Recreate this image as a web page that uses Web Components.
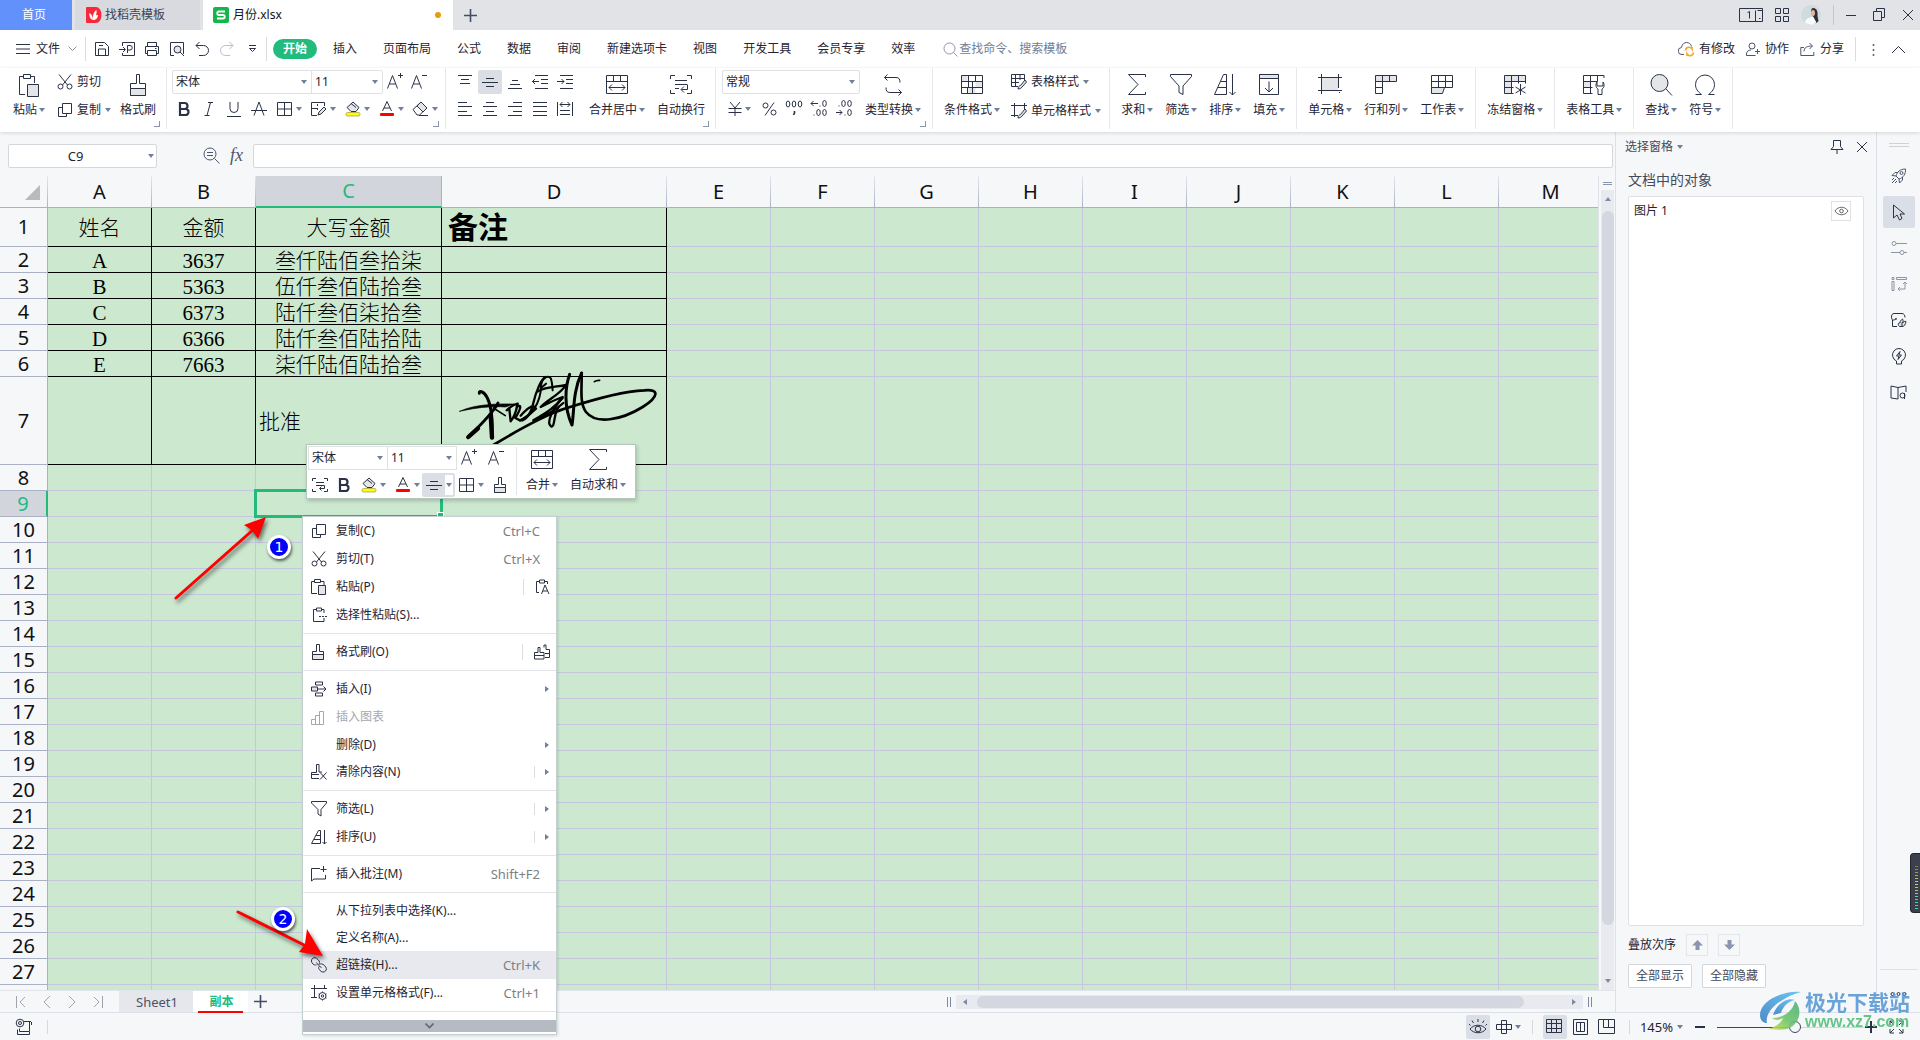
<!DOCTYPE html>
<html lang="zh-CN">
<head>
<meta charset="utf-8">
<title>月份.xlsx</title>
<style>
html,body{margin:0;height:100%}
body{font:12px/18px "Noto Sans","Noto Sans CJK SC",sans-serif;color:#1f2433;background:#f6f7f9;overflow:hidden}
</style>
</head>
<body>
<app-shell></app-shell>
<script>
const BASE = `
*{box-sizing:border-box}
:host{display:block}
button,input,select{font:inherit;color:inherit;background:none;border:0;margin:0;padding:0;outline:0;appearance:none;border-radius:0}
button{display:inline-flex;align-items:center;justify-content:center;white-space:nowrap;cursor:default}
a{color:inherit;text-decoration:none}
.caret{flex:none;display:inline-block;border:3px solid transparent;border-top:4px solid #717f9b;border-bottom:0}
.sel{position:relative;display:flex;align-items:center}
.sel select{width:100%;height:100%;padding-left:3px}
.sel .caret{position:absolute;right:4px;pointer-events:none}
`;
function define(name, css, html, ready) {
  customElements.define(name, class extends HTMLElement {
    connectedCallback() {
      if (this.shadowRoot) return;
      const root = this.attachShadow({mode: 'open'});
      root.innerHTML = `<style>${BASE}${css}</style>` + (typeof html === 'function' ? html(this) : html);
      if (ready) ready(this, root);
    }
  });
}

/* ---------- icons: [width, height, markup] ---------- */
const G = '#e3e5e9';
const I = {
  docer:[16,16,`<path d="M1 0h9a5.500 8 0 0 1 0 16H1a1 1 0 0 1-1-1V1a1 1 0 0 1 1-1z" fill="#f8283a" stroke="none"/><path d="M7 13C4 12 3 9 3.500 6c2 1 3 3 3.500 7zM7 13c-.5-4 .5-8 3.500-10 .5 4-.5 7-3.500 10zM7 13c.5-3 2-5 5-5 0 3-2 5-5 5z" fill="#fff" stroke="none"/>`],
  wps:[16,16,`<rect width="16" height="16" rx="2" fill="#14b54a" stroke="none"/><path d="M12 4.500H6A1.750 1.750 0 0 0 6 8h4a1.750 1.750 0 0 1 0 3.500H4" stroke="#fff" stroke-width="1.800"/>`],
  plus:[13,13,`<path d="M6.500 0v13M0 6.500h13" stroke="#434d66" stroke-width="1.600"/>`],
  device:[24,16,`<path d="M.5 1.500h23v13H.5z"/><path d="M16.500 3.500v11"/><path d="M8.500 5.500l2-1v7M18.500 3.500h5M20 11.500h1.500"/>`],
  apps:[14,16,`<path d="M.5 1.500h5v5h-5zM8.500 1.500h5v5h-5zM.5 9.500h5v5h-5zM8.500 9.500h5v5h-5z"/>`],
  avatar:[20,20,`<circle cx="10" cy="10" r="10" fill="#cfdcdf" stroke="none"/><path d="M12 3c4 0 5 4 4.500 8l1 5-2 2-3-6-2-3c-1-3 0-6 1.500-6z" fill="#352c30" stroke="none"/><ellipse cx="12" cy="8" rx="2" ry="3" fill="#e4b7a4" stroke="none"/><path d="M4 18c0-4 4-6 8-6l3 5-4 3z" fill="#f7fbfb" stroke="none"/>`],
  min:[10,14,`<path d="M0 7.500h10"/>`],
  restore:[12,14,`<path d="M3.500 3.500v-3h8v9h-3M.5 3.500h8v9h-8z"/>`],
  close:[12,14,`<path d="M1 2l10 10M11 2L1 12"/>`],
  burger:[14,12,`<path d="M0 1.500h14M0 6h14M0 10.500h14"/>`],
  chev:[9,6,`<path d="M.5.5l4 4 4-4" stroke="#8f97a5"/>`],
  chevd:[9,6,`<path d="M.5.500l4 4 4-4" stroke="#636873" stroke-width="1.600"/>`],
  save:[16,16,`<path d="M1.500 1.500h9l4 4v9h-13z"/><path d="M4.500 14v-6h7v6M5 4.500h4"/>`],
  export:[16,16,`<path d="M3.500 5V1.500h12v13h-12V12"/><path d="M0 8.500h6M4 6l2.500 2.500L4 11M8.500 12V4.500h2.500a2 2 0 0 1 0 4.500H8.500"/>`],
  print:[16,16,`<path d="M3.500 5V1.500h9V5M3.500 12.500h-2v-7h13v7h-2M3.500 9.500h9v5h-9z"/><path d="M11 7.500h1.500"/>`],
  preview:[16,16,`<path d="M5 14.500H1.500v-13h13V13"/><circle cx="8.500" cy="8.500" r="3.500" fill="${G}"/><path d="M11 11l4 4"/>`],
  undo:[14,16,`<path d="M4.500 1L1 4.500 4.500 8M1 4.500h7.500a4.500 4.500 0 0 1 0 10H4"/>`],
  redo:[14,16,`<path d="M9.500 1L13 4.500 9.500 8M13 4.500H5.500a4.500 4.500 0 0 0 0 10H10" stroke="#b9bec8"/>`],
  more:[9,8,`<path d="M1 .5h7M1.500 3.500l3 3 3-3z"/>`],
  search:[15,15,`<circle cx="6.500" cy="6.500" r="5.500" stroke="#8b95ab"/><path d="M10.500 10.500l4 4" stroke="#8b95ab"/>`],
  cloud:[17,16,`<path d="M6 13.500H4a3.500 3.500 0 0 1-.5-7C4 3 6.500 1.500 8.500 1.500c2.500 0 4.500 1.500 5 4" stroke="#4c566e"/><path d="M7.500 9.500a3.500 3.500 0 0 1 6.500-1.500V6M15.500 11.500A3.500 3.500 0 0 1 9 13v2" stroke="#f6a623" stroke-width="1.600"/>`],
  coop:[15,15,`<circle cx="6" cy="4" r="3" stroke="#4c566e"/><path d="M9.500 13.500h-9V12c0-2.500 2-4 4.500-4M11.500 7v5M9 9.500h5" stroke="#4c566e"/>`],
  share:[16,15,`<path d="M4 5.500H.8v8h13V10M4 9.500c0-4 3-5.500 8-5.500M9.500 1l3 3-3 3" stroke="#4c566e"/>`],
  dots:[3,13,`<path d="M1.500 1v2M1.500 6v2M1.500 11v2" stroke="#666" stroke-width="1.600"/>`],
  up:[15,9,`<path d="M1 8l6.500-6.500L14 8"/>`],
  paste:[24,24,`<path d="M8 21.500H2.500v-18H6M14 3.500h3.500V10"/><path d="M6.500 1.500h7v4h-7z"/><path d="M10.500 11.500h11v12h-11z" fill="${G}"/>`],
  brush:[20,24,`<path d="M8.500 10.500v-9h3v9h6v12h-15v-12z"/><path d="M2.500 15.500h15v7h-15z" fill="${G}"/>`],
  cut:[16,16,`<path d="M2 .5l8.500 10.500M14 .5L5.500 11"/><circle cx="3.500" cy="12.500" r="2.500"/><circle cx="12.500" cy="12.500" r="2.500"/>`],
  copy:[16,16,`<path d="M5.500 5.500h-4v9h8v-3"/><path d="M5.500 1.500h9v10h-9z"/>`],
  aplus:[16,18,`<path d="M.5 16.500l5-13 5 13M2.500 12h6"/><path d="M13.500 1v5M11 3.500h5"/>`],
  aminus:[16,18,`<path d="M.5 16.500l5-13 5 13M2.500 12h6"/><path d="M11 3.500h5"/>`],
  bold:[12,16,`<path d="M2 2h4.500a3 3 0 0 1 0 6H2zM2 8h5.500a3 3 0 0 1 0 6H2z" stroke-width="2.200"/>`],
  italic:[12,16,`<path d="M5 1.500h5M1.500 14.500h5M7.500 1.500l-3.500 13"/>`],
  under:[14,16,`<path d="M3 1v6.500a4 4 0 0 0 8 0V1M0 15.500h14"/>`],
  strike:[16,16,`<path d="M3 14.500L8 1l5 13.500M0 9.500h16"/>`],
  border:[16,16,`<path d="M.5 1.500h14v13H.5zM7.500 1.500v13M.5 8h14"/>`],
  drawb:[17,16,`<path d="M7 14.500H1.500v-13h13V5M1.500 7.500H8M7.500 3v2M7.500 7v2"/><path d="M8 14l1-3 5-5 2 2-5 5z" fill="${G}"/>`],
  fill:[16,16,`<path d="M8 1L2 6.500l4 4h5l3-4zM6 2.500l5 4" fill="${G}"/><rect x="1" y="11.500" width="14" height="3.500" rx="1.500" fill="#ff0" stroke="#8a8a2a" stroke-width=".6"/>`],
  fcolor:[16,16,`<path d="M3.500 10L8 .5l4.500 9.500M5 7h6"/><rect x="1" y="12" width="14" height="3" rx="1" fill="#f00" stroke="none"/>`],
  eraser:[17,16,`<path d="M1 8.500L9 1l6 6-7.500 7H5z"/><path d="M5 5l6 6 4-4-6-6z" fill="${G}"/><path d="M7 14.500h9"/>`],
  valt:[16,16,`<path d="M1 1.500h14M4 5.500h8M3 9.500h10"/>`],
  valm:[18,16,`<path d="M5 4.500h8M1 8.500h16M5 12.500h8"/>`],
  valb:[16,16,`<path d="M5 6.500h6M3 10.500h10M1 14.500h14"/>`],
  inddec:[16,16,`<path d="M3 1.500h13M9 5.500h7M9 9.500h7M3 14.500h13M0 7.500h7M3 5L.5 7.500 3 10"/>`],
  indinc:[16,16,`<path d="M3 1.500h13M9 5.500h7M9 9.500h7M3 14.500h13M0 7.500h7M4.500 5L7 7.500 4.500 10"/>`],
  al:[15,16,`<path d="M0 1.500h9M0 5.500h14M0 10.500h9M0 14.500h14"/>`],
  ac:[15,16,`<path d="M3 1.500h8M0 5.500h14M3 10.500h8M0 14.500h14"/>`],
  ar:[15,16,`<path d="M5 1.500h9M0 5.500h14M5 10.500h9M0 14.500h14"/>`],
  aj:[15,16,`<path d="M0 1.500h14M0 5.500h14M0 10.500h14M0 14.500h14"/>`],
  ad:[16,16,`<path d="M.5 1v14M15.500 1v14M3 3.500h10M5.500 1L3 3.500 5.500 6M10.500 1L13 3.500 10.500 6M3 9.500h10M3 13.500h10"/>`],
  merge:[24,22,`<path d="M1.500 1.500h21v18h-21zM1.500 7.500h21M8.500 1.500v6M15.500 1.500v6M4 13.500h16M7 10.500l-3 3 3 3M17 10.500l3 3-3 3"/>`],
  wrap:[24,22,`<path d="M1.500 5v-3.500H6M18 1.500h4.500V5M1.500 16v3.500H6M18 19.500h4.500V16M6 6.500h12M6 10.500h12M6 14.500h4M18.500 10.500v5h-6M15 12.500l-3 3 3 3"/>`],
  wraps:[16,16,`<path d="M.5 4V1.500H4M12 1.500h3.500V4M.5 12v2.500H4M12 14.500h3.500V12M4 5.500h8M4 8.500h8.500v3H8M9.500 9.500l-2 2 2 2"/>`],
  yen:[14,16,`<path d="M2 1l5 6 5-6M7 7v8M.5 7.500h13M.5 11.500h13"/>`],
  pct:[15,16,`<circle cx="3.500" cy="4.500" r="2.500"/><circle cx="11.500" cy="11.500" r="2.500"/><path d="M12 1.500L3 14.500"/>`],
  thou:[18,18,`<ellipse cx="3" cy="5" rx="1.800" ry="3"/><ellipse cx="9" cy="5" rx="1.800" ry="3"/><ellipse cx="15" cy="5" rx="1.800" ry="3"/><path d="M9.500 12v2l-1 2" stroke-width="1.600"/>`],
  decinc:[18,18,`<path d="M1 4.500h7M3.500 2L1 4.500 3.500 7M10 6.500v1"/><ellipse cx="14.500" cy="4.500" rx="1.800" ry="3"/><ellipse cx="8.500" cy="13.500" rx="1.800" ry="3"/><ellipse cx="14.500" cy="13.500" rx="1.800" ry="3"/><path d="M4 15.500v1"/>`],
  decdec:[18,18,`<path d="M1 13.500h6M4.500 11L7 13.500 4.500 16M10 15.500v1M4 6.500v1"/><ellipse cx="14.500" cy="4.500" rx="1.800" ry="3"/><ellipse cx="8.500" cy="4.500" rx="1.800" ry="3"/><ellipse cx="14.500" cy="13.500" rx="1.800" ry="3"/>`],
  conv:[20,24,`<path d="M4.500 1.500l-3 3 3 3M1.500 4.500H13c3 0 4 1.500 4 5M15.500 22.500l3-3-3-3M18.500 19.500H7c-3 0-4-1.500-4-5"/>`],
  cond:[24,22,`<path d="M1.500 1.500h6v6h-6zM15.500 7.500h7v6h-7zM8.500 13.500h7v6h-7z" fill="${G}" stroke="none"/><path d="M1.500 1.500h21v18h-21zM1.500 7.500h21M1.500 13.500h21M8.500 1.500v12M15.500 1.500v6M12.500 7.500v12M7.500 13.500v6"/>`],
  tstyle:[16,18,`<path d="M7 13.500H.5v-12h13V7M.5 5.500h13M.5 9.500H8M4.500 1.500v12M9 1.500V7"/><path d="M7 16c0-2 1-3 2.500-3.500L14 7l1.500 2-4.500 5c-1 1.500-2.500 2-4 2z" fill="${G}"/>`],
  cstyle:[16,18,`<path d="M0 3.500h16M3.500 1v14M0 13.500h7M13.500 1v6"/><path d="M7 16c0-2 1-3 2.500-3.500L14 7l1.500 2-4.500 5c-1 1.500-2.500 2-4 2z" fill="${G}"/>`],
  sum:[20,24,`<path d="M18.500 4V1.500h-17L11 11.500l-9.500 10h17V19"/>`],
  filter:[24,24,`<path d="M1.500 1.500h21v2L14 13v8.500l-4-2V13L1.500 3.500z"/>`],
  sort:[24,24,`<path d="M1.500 21.500l9-20h3v20zM5 14.500h8.500M8 8.500h5.500M19.500 1v21M16.500 19l3 3 3-3"/>`],
  filld:[22,24,`<path d="M1.500 1.500h19v20h-19z"/><path d="M1.500 1.500h19v4h-19z" fill="${G}"/><path d="M11 8.500V19M7 15l4 4 4-4"/>`],
  cell:[24,22,`<path d="M4 4h16v12H4z" fill="${G}" stroke="none"/><path d="M0 3.500h24M0 16.500h24M3.500 0v20M20.500 0v14"/><path d="M21 18.500h1"/>`],
  rowcol:[24,22,`<path d="M1.500 1.500h21v6h-21z" fill="${G}"/><path d="M1.500 7.500h7v12h-7zM8.500 1.500v6M15.500 1.500v6M1.500 13.500h7"/>`],
  sheet:[24,22,`<path d="M1.500 1.500h21v12h-21zM1.500 7.500h21M8.500 1.500v12M15.500 1.500v12"/><path d="M1.500 13.500h13l-2 6h-11z" fill="${G}"/>`],
  freeze:[24,24,`<path d="M1.500 2.500h21v6h-14v12h-7z" fill="${G}" stroke="none"/><path d="M1.500 2.500h21v8M1.500 2.500v18h9M1.500 8.500h21M8.500 2.500v18M15.500 2.500v8M1.500 14.500h9M17.500 11v11M12.500 14l10 6M22.500 14l-10 6"/>`],
  ttool:[24,24,`<path d="M1.500 8.500h7v6h-7z" fill="${G}" stroke="none"/><path d="M22 5V2.500h-20.500v18h9M1.500 8.500h14M8.500 2.500v18M15.500 2.500v6M1.500 14.500h9"/><path d="M15 9c-2 3-1 6 1 7v5.500h4V16c2-1 3-4 1-7v4h-6z" fill="#fff"/>`],
  find:[24,24,`<circle cx="10.500" cy="10" r="8.500" fill="${G}"/><path d="M17 16l6 6.500"/>`],
  omega:[22,24,`<path d="M1.500 21.500h6c-4-3-6-6-6-10a9.500 9.500 0 0 1 19 0c0 4-2 7-6 10h6"/>`],
  zoomo:[17,17,`<circle cx="7" cy="7" r="6" stroke="#4c5872"/><path d="M11.500 11.500l5 5M4 5.500h6M4 8.500h6" stroke="#4c5872"/>`],
  first:[10,12,`<path d="M.5 0v12M9 1L4 6l5 5" stroke="#9fa3ab"/>`],
  prev:[8,12,`<path d="M7 0L1 6l6 6" stroke="#9fa3ab"/>`],
  next:[8,12,`<path d="M1 0l6 6-6 6" stroke="#9fa3ab"/>`],
  last:[10,12,`<path d="M9.500 0v12M1 1l5 5-5 5" stroke="#9fa3ab"/>`],
  macro:[18,18,`<circle cx="5" cy="5" r="3.800"/><circle cx="5" cy="5" r="1.500"/><path d="M9 3.500h7M14.500 4v9M16.500 4v3M2.500 11.500v5h12v-3h-10v-3"/>`],
  eye:[18,16,`<path d="M1 10c4-5 12-5 16 0-4 5-12 5-16 0z"/><circle cx="9" cy="10" r="2.800"/><path d="M9 3V0M4.500 4L3 1.500M13.500 4L15 1.500M1.500 6.500L0 5M16.500 6.500L18 5"/>`],
  eyes:[15,12,`<path d="M1 6c3-5 10-5 13 0-3 5-10 5-13 0z" stroke="#666"/><circle cx="7.500" cy="6" r="1.800" stroke="#666"/>`],
  cross:[16,14,`<path d="M5.500.5h5v13h-5zM.5 4.500h15v5H.5z"/>`],
  vgrid:[17,15,`<path d="M.5.500h15v13H.5zM.5 4.500h15M.5 9.500h15M5.500.500v13M10.500.500v13"/>`],
  vpage:[15,16,`<path d="M.5.5h14v15H.5zM3.500 3.500h8v9h-8zM7.500 3.500v9"/>`],
  vbreak:[17,15,`<path d="M.5.5h16v14H.5zM5.500.5v8h11M10.500.5v8"/>`],
  full:[15,14,`<path d="M1 5V1h4M10 1h4v4M14 9v4h-4M5 13H1V9M1 1l4 4M14 1l-4 4M14 13l-4-4M1 13l4-4"/>`],
  pin:[14,14,`<path d="M3.500.5h7v6l2.500 3H1l2.500-3zM7 9.500V14"/>`],
  rocket:[16,16,`<path d="M5 8c1-4 4-7 9.500-7C15 6 12 10 8 11zM5 8L1 7.500 4 4.500h3M8 11l.5 4 3-3V9M3 10l-2 2M5 11l-4 4M6 13l-2 2" stroke="#4c566e"/><circle cx="10.500" cy="5" r="1.500" stroke="#4c566e"/>`],
  cursor:[14,17,`<path d="M1.500 1v13l3.500-3 2.500 5 2.500-1.500-2-4.500h4.500z"/>`],
  sliders:[16,16,`<path d="M5 3.500h11M0 12.500h9M13 12.500h3" stroke="#8d94a3"/><circle cx="3" cy="3.500" r="2" stroke="#8d94a3"/><circle cx="11" cy="12.500" r="2" stroke="#8d94a3"/>`],
  layout:[16,16,`<path d="M1 1.500h2v2H1zM5.500 1.500h10v2h-10zM1 5.500h2v9H1zM14 6v7H7M12 8l2-2 2 2M9 11l-2 2 2 2" stroke="#8d94a3"/>`],
  backup:[17,16,`<path d="M7 14.500H2.500V8C1 6 1 1.500 4 1.500h8c2 0 3 2 3 4M3 8c2 0 3-.5 3-2M6 6v2"/><path d="M9.500 14.500c-2-1.500-1.500-4 .5-3.500 0-2 1-3 2.500-4 1 1.500.5 3 0 4 1-1.500 2.500-2 3.500-1.500-.5 3-1.500 5-4 5zM12 14.500v-4" fill="${G}"/>`],
  bulb:[16,17,`<path d="M5.500 13a6.500 6.500 0 1 1 5 0v3h-5z"/><path d="M9 3.500L5.500 8H8l-1 3.500L10.500 7H8z"/>`],
  book:[17,15,`<path d="M8 14l-7-1V1l7 1.500L16 1v6M8 2.500V14"/><circle cx="12.500" cy="10.500" r="2.500"/><path d="M14.500 8v6"/>`],
  ooo:[17,6,`<circle cx="2.500" cy="3" r="1.500"/><circle cx="8.500" cy="3" r="1.500"/><circle cx="14.500" cy="3" r="1.500"/>`],
  arrowup:[11,10,`<path d="M5.500 0L11 5.500H7.500V10h-4V5.500H0z" fill="#8b95ab" stroke="none"/>`],
  arrowdn:[11,10,`<path d="M5.500 10L0 4.500h3.500V0h4v4.500H11z" fill="#8b95ab" stroke="none"/>`],
  mpaste:[16,16,`<path d="M6 14.500H.5V2.500H3M10 2.500h3V6"/><path d="M3.500.5h6v3h-6z"/><path d="M7.500 6.500h7v9h-7z" fill="${G}"/>`],
  mspecial:[16,16,`<path d="M13 11v3.500H2.500V2.500H5M11 2.500h2V6"/><path d="M5.500 1h5v3h-5z"/><path d="M8 9.500h2M11 9.500h2M14 9.500h2"/>`],
  pastea:[16,16,`<path d="M4 13.500H1.500V2.500H4M10 2.500h2.500V5"/><path d="M4.500 1h5v3h-5z"/><path d="M6.500 15L10 6l4 9M8 12h4.500"/>`],
  mbrush:[14,16,`<path d="M5.500 7.500v-7h3v7h4v8h-11v-8z"/><path d="M1.500 10.500h11v5h-11z" fill="${G}"/>`],
  brush2:[17,16,`<path d="M10 3.500V1h2v4.500h3.500v8H11"/><path d="M4 8.500V3.500h2v5h4v6.500H.5V8.500z"/><path d="M.5 11.500h9.500M11 9.500h4"/>`],
  minsert:[16,16,`<path d="M4.500 1h7v3h-7zM4.500 12h7v3h-7z"/><path d="M.5 6h6v4h-6z" fill="${G}"/><path d="M6.500 8H15M12.500 5.500L15 8l-2.500 2.500"/>`],
  mchart:[14,15,`<path d="M.5 9.500h4v5h-4zM4.500 5.500h4v9h-4zM8.500 1.500h4v13h-4z" stroke="#a4a8b0"/>`],
  mclear:[17,16,`<path d="M8 14.500H.5V8.500h5V.500h2.500v7.500h3M.5 10.500H8M9 8.500l6.500 7M15.500 8.500L9 15.500"/>`],
  mfilter:[16,16,`<path d="M.5.5h15v1.500L10 8.500v6.500l-3-2V8.500L.5 2z"/>`],
  msort:[16,16,`<path d="M.5 14.500l7-13h2v13zM3 10.500h6.500M5 6.500h4.500M13.500 1v14M11.500 13l2 2 2-2"/>`],
  mnote:[16,16,`<path d="M9 2.500H.5v12.500l2.500-2h11.500V9M12.500 0v6M9.500 3.500h6"/>`],
  mlink:[16,16,`<path d="M2 7C0 5 0 3 1.500 1.500 3.500 0 5 .5 7 2.500S9 6.500 7.500 7.500M9 13.500c2 2 4 2 5.500.5s1-3.500-1-5.500-4-2-5-1M5.500 5.500c1 2 3 4 5 5M2 7c1 1 2 1 3.500 1M9 13.500C8 12 7 11 8 9.500"/>`],
  mformat:[16,16,`<path d="M0 3.500h16M3.500 0v12M0 12.500h6M13.500 0v4"/><circle cx="11.500" cy="11" r="3.500"/><circle cx="11.500" cy="11" r="1.200"/><path d="M11.500 6.500v1M11.500 14.500v1M7.500 9l1 .5M14.500 12.500l1 .5M15.500 9l-1 .5M8.500 12.500l-1 .5"/>`]
};
define('ui-icon', `:host{display:inline-flex;flex:none}svg{display:block;fill:none;stroke:#2b3245;stroke-width:1}`, el => {
  const [w, h, m] = I[el.getAttribute('name')];
  return `<svg width="${w}" height="${h}" viewBox="0 0 ${w} ${h}" aria-hidden="true">${m}</svg>`;
});

/* ---------- title bar ---------- */
define('title-bar', `
:host{display:flex;height:30px;background:#e1e3e7;gap:3px;align-items:stretch}
.tab{display:flex;align-items:center}
.home{width:72px;justify-content:center;padding-right:4px;background:#6391fc;color:#fff}
.tpl{width:125px;justify-content:flex-start;padding-left:11px;gap:3px;background:#d8dadf;color:#3c4354}
.doc{width:250px;padding:0 12px 0 10px;gap:4px;background:#fff;color:#111}
.dot{margin-left:auto;width:6px;height:6px;border-radius:50%;background:#e59d0d}
.add{margin-left:8px}
.win{margin-left:auto;display:flex;align-items:center;gap:12px;padding-right:6px}
.win i{width:1px;height:20px;background:#c3c6cd}
.ctl{display:flex;gap:17px}`,
`<button class="tab home">首页</button>
<button class="tab tpl"><ui-icon name="docer"></ui-icon>找稻壳模板</button>
<button class="tab doc"><ui-icon name="wps"></ui-icon>月份.xlsx<span class="dot"></span></button>
<button class="add" aria-label="新建"><ui-icon name="plus"></ui-icon></button>
<div class="win"><ui-icon name="device"></ui-icon><ui-icon name="apps"></ui-icon><ui-icon name="avatar"></ui-icon><i></i>
<span class="ctl"><button aria-label="最小化"><ui-icon name="min"></ui-icon></button><button aria-label="还原"><ui-icon name="restore"></ui-icon></button><button aria-label="关闭"><ui-icon name="close"></ui-icon></button></span></div>`);

/* ---------- menu bar ---------- */
define('menu-bar', `
:host{display:flex;align-items:center;height:38px;background:#fff;padding:0 14px 0 16px}
.file{gap:6px}.file ui-icon:last-child{margin-left:2px}
.sep{width:1px;height:24px;background:#d9dbe0;margin:0 8px}
.quick{display:flex;gap:9px;align-items:center}
.quick button{width:16px}
nav{display:flex;gap:26px;margin-left:16px}
.on{background:#22bb7e;color:#fff;font-weight:700;height:20px;width:44px;border-radius:10px}
label{display:flex;align-items:center;gap:1px;margin-left:28px}
input{width:160px}input::placeholder{color:#717c95;opacity:1}
.r{margin-left:auto;display:flex;align-items:center;gap:11px}
.r button{gap:4px}.r .sep{margin:0}.r .last{margin-left:5px}`,
`<button class="file"><ui-icon name="burger"></ui-icon>文件<ui-icon name="chev"></ui-icon></button><span class="sep"></span>
<div class="quick">${['save','export','print','preview','undo','redo','more'].map(n => `<button aria-label="${n}"><ui-icon name="${n}"></ui-icon></button>`).join('')}</div><span class="sep" style="margin:0 6px"></span>
<button class="on">开始</button>
<nav>${['插入','页面布局','公式','数据','审阅','新建选项卡','视图','开发工具','会员专享','效率'].map(t => `<a href="#">${t}</a>`).join('')}</nav>
<label aria-label="搜索"><ui-icon name="search"></ui-icon><input placeholder="查找命令、搜索模板"></label>
<div class="r"><button><ui-icon name="cloud"></ui-icon>有修改</button><button><ui-icon name="coop"></ui-icon>协作</button><button><ui-icon name="share"></ui-icon>分享</button>
<span class="sep"></span><button class="last" aria-label="更多"><ui-icon name="dots"></ui-icon></button><button class="last" aria-label="收起"><ui-icon name="up"></ui-icon></button></div>`);

/* ---------- ribbon parts ---------- */
define('big-button', `
button{flex-direction:column;justify-content:flex-start}
.ic{height:26px;display:flex;align-items:center;margin-bottom:3px}
.tx{display:flex;align-items:center;gap:2px;height:18px}`, el =>
`<button><span class="ic"><ui-icon name="${el.getAttribute('icon')}"></ui-icon></span><span class="tx"><slot></slot>${el.hasAttribute('plain') ? '' : '<i class="caret"></i>'}</span></button>`);
define('tool-button', `
button{height:24px;min-width:24px;gap:3px}
:host([drop]) button{min-width:34px}
:host([text]) button{gap:4px}
:host([on]) button{background:#dbdfe5;border-radius:2px}`, el =>
`<button aria-label="${el.getAttribute('icon')}"><ui-icon name="${el.getAttribute('icon')}"></ui-icon><slot></slot>${el.hasAttribute('drop') ? '<i class="caret"></i>' : ''}</button>`);
define('ribbon-group', `
:host{display:flex;position:relative;gap:12px;height:61px;padding:4px 11px 0;border-right:1px solid #e6e8eb}
:host([corner])::after{content:"";position:absolute;right:6px;bottom:2px;width:5px;height:5px;border:solid #8b95ab;border-width:0 1px 1px 0}`, `<slot></slot>`);
const tb = (i, a = '', t = '') => `<tool-button icon="${i}" ${a}>${t}</tool-button>`;
const bb = (i, t, a = '') => `<big-button icon="${i}" ${a}>${t}</big-button>`;
define('ribbon-bar', `
:host{display:flex;height:64px;background:#fff;box-shadow:0 1px 4px #0002;position:relative;z-index:2}
.col{display:flex;flex-direction:column;align-items:flex-start;gap:3px;margin-top:-2px}
.row{display:flex;align-items:center;height:24px}
.g1{padding:4px 10px 0 13px;gap:9px}.g1 .col{margin-left:3px}
.g2{padding:4px 3px 0 5px}.g3{padding:4px 10px 0 7px}.g4{padding:4px 11px 0 6px;gap:5px}.g5{padding-right:8px;gap:11px}
.box{display:flex;border:1px solid #dfe1e5;border-radius:2px}
.a1{gap:1px}
.f1{width:138px;height:22px}.f2{width:71px;height:22px;border-left:1px solid #dfe1e5}
.f3{width:136px;height:22px}`,
`<ribbon-group corner class="g1">${bb('paste','粘贴')}<div class="col">${tb('cut','text','剪切')}${tb('copy','text drop','复制')}</div>${bb('brush','格式刷','plain')}</ribbon-group>
<ribbon-group corner class="g2"><div class="col"><div class="row"><div class="box"><span class="sel f1"><select aria-label="字体"><option>宋体</option></select><i class="caret"></i></span><span class="sel f2"><select aria-label="字号"><option>11</option></select><i class="caret"></i></span></div>${tb('aplus')}${tb('aminus')}</div>
<div class="row a1">${tb('bold')}${tb('italic')}${tb('under')}${tb('strike')}<span class="row">${tb('border','drop')}${tb('drawb','drop')}${tb('fill','drop')}${tb('fcolor','drop')}${tb('eraser','drop')}</span></div></div></ribbon-group>
<ribbon-group corner class="g3"><div class="col"><div class="row a1">${tb('valt')}${tb('valm','on')}${tb('valb')}${tb('inddec')}${tb('indinc')}</div><div class="row a1">${tb('al')}${tb('ac')}${tb('ar')}${tb('aj')}${tb('ad')}</div></div>${bb('merge','合并居中')}${bb('wrap','自动换行','plain')}</ribbon-group>
<ribbon-group corner class="g4"><div class="col"><div class="row"><div class="box"><span class="sel f3"><select aria-label="数字格式"><option>常规</option></select><i class="caret"></i></span></div></div><div class="row a1">${tb('yen','drop')}${tb('pct')}${tb('thou')}${tb('decinc')}${tb('decdec')}</div></div>${bb('conv','类型转换')}</ribbon-group>
<ribbon-group class="g5">${bb('cond','条件格式')}<div class="col">${tb('tstyle','text drop','表格样式')}${tb('cstyle','text drop','单元格样式')}</div></ribbon-group>
<ribbon-group>${bb('sum','求和')}${bb('filter','筛选')}${bb('sort','排序')}${bb('filld','填充')}</ribbon-group>
<ribbon-group>${bb('cell','单元格')}${bb('rowcol','行和列')}${bb('sheet','工作表')}</ribbon-group>
<ribbon-group>${bb('freeze','冻结窗格')}</ribbon-group>
<ribbon-group>${bb('ttool','表格工具')}</ribbon-group>
<ribbon-group>${bb('find','查找')}${bb('omega','符号')}</ribbon-group>`);

/* ---------- formula bar ---------- */
define('formula-bar', `
:host{display:flex;align-items:center;height:44px;padding:4px 2px 0 8px}
.name{width:149px;height:24px;border:1px solid #d5d7dc;border-radius:2px;background:#fff}
.name input{width:100%;height:100%;text-align:center;font-size:13px;padding-right:14px}
.name .caret{right:2px}
.tools{display:flex;align-items:center;gap:10px;margin:-2px 10px 0 46px;color:#4c5872}
.fx{font:italic 18px/18px "Liberation Serif",serif}
.val{flex:1;min-width:0;height:24px;border:1px solid #d5d7dc;border-radius:2px;background:#fff;padding:0 6px}`,
`<div class="sel name"><input aria-label="名称框" value="C9"><i class="caret"></i></div>
<div class="tools"><ui-icon name="zoomo"></ui-icon><span class="fx">fx</span></div><input class="val" aria-label="编辑栏">`);

/* ---------- sheet ---------- */
const DATA = [['姓名','金额','大写金额','备注'],['A','3637','叁仟陆佰叁拾柒',''],['B','5363','伍仟叁佰陆拾叁',''],['C','6373','陆仟叁佰柒拾叁',''],['D','6366','陆仟叁佰陆拾陆',''],['E','7663','柒仟陆佰陆拾叁',''],['','','批准','']];
define('signature-mark', `:host{position:absolute;left:14px;top:-9px;z-index:1;pointer-events:none}svg{display:block;fill:none;stroke:#000;stroke-linecap:round;stroke-linejoin:round}`,
`<svg width="204" height="80" viewBox="170 595 612 240" role="img" aria-label="签名">
<path d="M181 725C210 712 250 701 345 703L318 712C270 708 220 716 181 725z" fill="#000" stroke-width="2"/>
<path d="M240 671C238 660 255 665 264 685C280 718 280 760 278 804" stroke-width="9"/><path d="M274 735L278 804" stroke-width="13"/>
<path d="M296 700C285 725 250 760 206 803" stroke-width="9"/><path d="M236 776L207 802" stroke-width="13"/>
<path d="M282 715L318 738" stroke-width="5"/>
<path d="M330 718L334 755C350 735 352 715 355 702C340 705 330 715 322 722M352 712C372 700 360 725 348 745L362 752C372 748 385 740 410 717C402 700 380 720 364 738" stroke-width="7"/>
<path d="M362 752C392 745 425 700 425 648C428 625 446 614 455 627C460 645 459 655 460 662M425 655L440 642" stroke-width="6"/>
<path d="M362 752C375 755 395 735 402 700C410 665 425 630 438 622" stroke-width="7"/>
<path d="M416 665C440 650 475 652 500 646C485 672 445 690 424 712C450 700 470 688 490 682C470 712 440 730 402 752C442 738 470 720 492 700" stroke-width="7"/>
<path d="M490 685C460 715 440 760 455 770C468 775 462 730 478 712" stroke-width="7"/>
<path d="M511 614C498 650 492 710 518 766C525 725 520 665 547 610" stroke-width="9"/>
<path d="M547 610C548 655 540 700 560 727C590 765 665 752 730 712C780 680 780 657 735 662C670 665 580 690 500 716C430 738 350 785 282 826" stroke-width="8"/>
<path d="M585 636C592 631 598 632 601 632" stroke-width="5"/></svg>`);
define('sheet-grid', `
:host{position:relative;overflow:hidden;min-height:0;background:#f6f7f9;--line:#c4c7dd}
table{border-collapse:separate;border-spacing:0;table-layout:fixed;width:1603px}
th,td{padding:0;overflow:visible;white-space:nowrap}
th{font:400 20px/22px "Noto Sans","Noto Sans CJK SC",sans-serif;color:#111}
thead th{height:32px;border-right:1px solid #aab0c6;border-bottom:1px solid #aab0c6;border-image:linear-gradient(#e6e8ee,#aab0c6) 1}
tbody th{border-right:1px solid #aab0c6;border-bottom:1px solid #aab0c6;height:26px;line-height:24px}
thead th.on{background:#d2d5dc;color:#22bb7e;border-image:none;border-bottom:2px solid #22bb7e}
tbody th.on{background:#d2d5dc;color:#22bb7e;border-right:2px solid #22bb7e}
td{background:#cce8cf;border-right:1px solid var(--line);border-bottom:1px solid var(--line);font:300 21px/21px "Liberation Serif","Noto Sans CJK SC",serif;color:#000;text-align:center;padding-top:4px;position:relative}
td.b{border-color:#000}
td.big{font-size:30px;line-height:34px;font-weight:700;text-align:left;padding-left:6px}
td.left{text-align:left;padding-left:3px}
.h1 td,.h1 th{height:39px}.h7 td,.h7 th{height:88px}
tr:not(.h1):not(.h7) td{height:26px}
.h1 td{padding-top:2px}
.corner{position:relative}
.corner::after{content:"";position:absolute;right:7px;bottom:7px;border-left:15px solid transparent;border-bottom:15px solid #b9babd}
.cur::after{content:"";position:absolute;inset:-2px;border:3px solid #22bb7e;z-index:1}
.cur::before{content:"";position:absolute;right:-3px;bottom:-3px;width:5px;height:5px;background:#22bb7e;border:1px solid #fff;z-index:2}`,
() => {
  const cols = 'ABCDEFGHIJKLM'.split('');
  const w = {A:104,B:104,C:186,D:225};
  const lastFull = 27;
  let h = `<table><colgroup><col style="width:48px">${cols.map(c => `<col style="width:${w[c] || 104}px">`).join('')}</colgroup><thead><tr><th class="corner"></th>${cols.map(c => `<th class="${c === 'C' ? 'on' : ''}">${c}</th>`).join('')}</tr></thead><tbody>`;
  for (let r = 1; r <= lastFull + 1; r++) {
    h += `<tr class="${r === 1 ? 'h1' : r === 7 ? 'h7' : ''}"><th class="${r === 9 ? 'on' : ''}">${r <= lastFull ? r : ''}</th>`;
    cols.forEach((c, i) => {
      const v = (DATA[r - 1] || [])[i] || '';
      const k = [r <= 7 && i < 4 && 'b', r === 1 && i === 3 && 'big', r === 7 && i === 2 && 'left', r === 9 && i === 2 && 'cur'].filter(Boolean).join(' ');
      h += `<td class="${k}">${v}${r === 7 && i === 3 ? '<signature-mark></signature-mark>' : ''}</td>`;
    });
    h += '</tr>';
  }
  return h + '</tbody></table>';
});
define('v-scroll', `
:host{display:flex;flex-direction:column;width:17px;padding:6px 1px 0 2px;background:#f6f7f9;border-left:1px solid #dfe1e8}
.split{height:3px;margin:0 2px;border:solid #8b95ab;border-width:1px 0}
.track{flex:1;margin-top:5px;background:#e9eaf0;display:flex;flex-direction:column;align-items:center;padding:7px 0 7px}
.thumb{flex:1;width:12px;border-radius:6px;background:#d4d7df;margin:10px 0 54px}
.u,.d{border:3px solid transparent}
.u{border-bottom:4px solid #7e8aa5;border-top:0}.d{border-top:4px solid #7e8aa5;border-bottom:0}`,
`<div class="split"></div><div class="track"><i class="u"></i><div class="thumb"></div><i class="d"></i></div>`);

/* ---------- sheet tabs ---------- */
define('sheet-tabs', `
:host{display:flex;align-items:center;height:22px;border-top:1px solid #e2e4ea;background:#f6f7f9}
.nav{display:flex;gap:17px;width:119px;padding-left:16px}
.tab{height:21px;width:74px;padding-left:2px;background:#e6e7ec;color:#4a5264;font-size:13px}
.cur{width:55px;background:#fff;color:#22bb7e;font-weight:700;font-size:12px;position:relative}
.cur::after{content:"";position:absolute;left:5px;right:5px;bottom:-1px;height:2px;background:#f00}
.add{margin-left:6px}
.h{display:flex;align-items:center;margin-left:auto;width:645px;gap:5px}
.s{width:4px;height:10px;border:solid #7e8aa5;border-width:0 1px}
.track{flex:1;height:14px;background:#e9eaf0;display:flex;align-items:center;padding:0 7px}
.thumb{flex:1;height:12px;border-radius:6px;background:#d4d7df;margin:0 48px 0 10px}
.l,.r{border:3px solid transparent}.l{border-right:4px solid #7e8aa5;border-left:0}.r{border-left:4px solid #7e8aa5;border-right:0}
.end{width:23px}`,
`<div class="nav">${['first','prev','next','last'].map(n => `<button aria-label="${n}"><ui-icon name="${n}"></ui-icon></button>`).join('')}</div>
<button class="tab">Sheet1</button><button class="tab cur">副本</button><button class="add" aria-label="新建工作表"><ui-icon name="plus"></ui-icon></button>
<div class="h"><i class="s"></i><div class="track"><i class="l"></i><div class="thumb"></div><i class="r"></i></div><i class="s"></i></div><div class="end"></div>`);

/* ---------- status bar ---------- */
define('status-bar', `
:host{display:flex;align-items:center;height:28px;border-top:1px solid #dde0e8;background:#f6f7f9;padding:0 16px 0 15px}
.sep{width:1px;height:14px;background:#d5d8df}
.l{margin-left:14px}
.r{margin-left:auto;display:flex;align-items:center}
.r button{height:24px;width:24px}.r .on{background:#dadee6;border-radius:2px}
.r .drop{width:34px;gap:3px;margin-left:2px}
.views{display:flex;gap:2px}
.r .zoom{margin-left:10px;gap:4px;width:auto;font-size:13px}
.step{width:10px;height:2px;background:#2b3245}
.pl{position:relative;width:12px;height:2px;background:#2b3245}.pl::after{content:"";position:absolute;left:5px;top:-5px;width:2px;height:12px;background:#2b3245}
input{width:148px;height:14px;margin:0 0 0 12px;background:linear-gradient(#3d465c,#3d465c) 0 7px/72px 1px no-repeat,linear-gradient(#d3d6dd,#d3d6dd) 0 7px/100% 1px no-repeat}
input::-webkit-slider-thumb{appearance:none;width:12px;height:12px;border-radius:50%;background:#f6f7f9;border:1px solid #3d465c}`,
`<ui-icon name="macro"></ui-icon><i class="sep l"></i>
<div class="r"><button class="on" aria-label="护眼模式"><ui-icon name="eye"></ui-icon></button><button class="drop" aria-label="阅读模式"><ui-icon name="cross"></ui-icon><i class="caret"></i></button><i class="sep" style="margin:0 10px 0 6px"></i>
<span class="views"><button class="on" aria-label="普通视图"><ui-icon name="vgrid"></ui-icon></button><button aria-label="页面布局"><ui-icon name="vpage"></ui-icon></button><button aria-label="分页预览"><ui-icon name="vbreak"></ui-icon></button></span><i class="sep" style="margin-left:10px"></i>
<button class="zoom">145%<i class="caret"></i></button><i class="step" style="margin-left:12px"></i><input type="range" aria-label="缩放" min="0" max="100" value="53"><i class="pl"></i><ui-icon name="full" style="margin-left:12px"></ui-icon></div>`);

/* ---------- selection pane and rail ---------- */
define('side-panel', `
:host{display:flex;flex-direction:column;border:solid #dde0e8;border-width:0 1px;padding:0 12px 24px;color:#434a5c}
.hd{display:flex;align-items:center;height:30px;margin:0 -3px;gap:5px}
.hd span:first-child{display:flex;align-items:center;gap:4px;margin-right:auto}
.hd ui-icon+ui-icon{margin-left:7px}.hd ui-icon:last-child{margin-right:-1px}
h2{font-size:14px;line-height:20px;font-weight:400;margin:8px 0 6px}
ul{flex:1;margin:0;padding:4px 12px 0 5px;list-style:none;background:#fff;border:1px solid #dfe1e5;border-radius:2px;color:#1f2433}
li{display:flex;justify-content:space-between;align-items:center}
.e{width:20px;height:20px;border:1px solid #dfe1e5}
.o{display:flex;align-items:center;gap:10px;height:22px;margin:8px 0;color:#1f2433}
.o button{width:22px;height:22px;border:1px solid #e4e6ea}
.b{display:flex;gap:10px}.b button{width:64px;height:24px;border:1px solid #d5d7dc;background:#fff;border-radius:1px}`,
`<div class="hd"><span>选择窗格<i class="caret"></i></span><ui-icon name="pin"></ui-icon><ui-icon name="close"></ui-icon></div>
<h2>文档中的对象</h2><ul><li>图片 1<button class="e" aria-label="隐藏图片 1"><ui-icon name="eyes"></ui-icon></button></li></ul>
<div class="o">叠放次序<button aria-label="上移"><ui-icon name="arrowup"></ui-icon></button><button aria-label="下移"><ui-icon name="arrowdn"></ui-icon></button></div>
<div class="b"><button>全部显示</button><button>全部隐藏</button></div>`);
define('side-rail', `
:host{display:flex;flex-direction:column;align-items:center;padding:11px 0 15px}
.grip{width:20px;height:4px;border:solid #cfd1d6;border-width:1px 0;margin-bottom:13px}
button{width:32px;height:32px;margin-bottom:4px;border-radius:2px}.on{background:#dadee6}
.ln{width:38px;height:1px;background:#dde0e8;margin:auto 0 21px}`,
`<i class="grip"></i>${['rocket','cursor','sliders','layout','backup','bulb','book'].map(n => `<button class="${n === 'cursor' ? 'on' : ''}" aria-label="${n}"><ui-icon name="${n}"></ui-icon></button>`).join('')}<i class="ln"></i><ui-icon name="ooo"></ui-icon>`);

/* ---------- floating mini toolbar ---------- */
define('mini-toolbar', `
:host{display:flex;position:absolute;left:306px;top:444px;width:330px;height:55px;background:#fff;border:1px solid #b5c9bb;box-shadow:1px 2px 4px #0003;z-index:4;padding:1px}
.col{display:flex;flex-direction:column;gap:3px;width:208px}
.row{display:flex;align-items:center;height:24px}
.box{display:flex;border:1px solid #dfe1e5}
.f1{width:78px;height:22px}.f2{width:69px;height:22px;border-left:1px solid #dfe1e5}
.al{display:flex;align-items:center;background:#dbdfe5;height:24px;width:33px;border-radius:2px;margin:0 -1px 0 -2px}
.al i{margin-left:2px;width:8px;height:20px;background:#fff;display:flex;align-items:center;justify-content:center}
.al ui-icon{margin-left:3px}
.sep{width:1px;height:48px;margin:1px 9px 0 0;background:#e2e4e8}
big-button{margin-top:1px}
big-button+big-button{margin-left:12px}`,
`<div class="col"><div class="row"><div class="box"><span class="sel f1"><select aria-label="字体"><option>宋体</option></select><i class="caret"></i></span><span class="sel f2"><select aria-label="字号"><option>11</option></select><i class="caret"></i></span></div>${tb('aplus')}${tb('aminus','style="margin-left:3px"')}</div>
<div class="row">${tb('wraps')}${tb('bold')}${tb('fill','drop')}${tb('fcolor','drop')}<span class="al"><ui-icon name="valm"></ui-icon><i><b class="caret"></b></i></span>${tb('border','drop')}${tb('mbrush')}</div></div><span class="sep"></span>
${bb('merge','合并')}${bb('sum','自动求和')}`);

/* ---------- context menu ---------- */
define('menu-item', `
button{width:100%;height:28px;justify-content:flex-start;padding:0 16px 0 8px}
:host(:not([icon])) button{height:27px}
:host([hot]) button{background:#e7e9ee}
:host([off]){color:#a4a8b0}
.ic{width:25px;display:flex}
.k{margin-left:auto;font-size:13px;color:#7d7f85}
.x{margin-left:auto;display:flex;align-items:center;gap:11px;margin-right:-11px}
.x i{width:1px;height:16px;background:#dcdee3}
.ar{margin-left:auto;margin-right:-9px;display:flex;align-items:center;gap:10px}
.ar i{width:1px;height:12px;background:#dcdee3}
.ar b{border:3px solid transparent;border-left:4px solid #717f9b;border-right:0}`, el => {
  const a = n => el.getAttribute(n);
  return `<button><span class="ic">${a('icon') ? `<ui-icon name="${a('icon')}"></ui-icon>` : ''}</span><slot></slot>${a('key') ? `<span class="k">${a('key')}</span>` : ''}${a('extra') ? `<span class="x"><i></i><ui-icon name="${a('extra')}"></ui-icon></span>` : ''}${a('sub') ? `<span class="ar">${a('sub') === '2' ? '<i></i>' : ''}<b></b></span>` : ''}</button>`;
});
define('context-menu', `
:host{position:absolute;left:302px;top:516px;width:255px;background:#fff;border:1px solid #c3cfd0;box-shadow:1px 1px 3px #0002;z-index:3}
hr{height:1px;border:0;background:#e2e4e8;margin:4px 0}
.more{width:100%;height:12px;background:#b6bac2;margin-top:4px}`,
`<menu-item icon="copy" key="Ctrl+C">复制(C)</menu-item><menu-item icon="cut" key="Ctrl+X">剪切(T)</menu-item><menu-item icon="mpaste" extra="pastea">粘贴(P)</menu-item><menu-item icon="mspecial">选择性粘贴(S)...</menu-item><hr>
<menu-item icon="mbrush" extra="brush2">格式刷(O)</menu-item><hr>
<menu-item icon="minsert" sub="1">插入(I)</menu-item><menu-item icon="mchart" off>插入图表</menu-item><menu-item sub="1">删除(D)</menu-item><menu-item icon="mclear" sub="2">清除内容(N)</menu-item><hr>
<menu-item icon="mfilter" sub="2">筛选(L)</menu-item><menu-item icon="msort" sub="2">排序(U)</menu-item><hr>
<menu-item icon="mnote" key="Shift+F2">插入批注(M)</menu-item><hr>
<menu-item>从下拉列表中选择(K)...</menu-item><menu-item>定义名称(A)...</menu-item><menu-item icon="mlink" key="Ctrl+K" hot>超链接(H)...</menu-item><menu-item icon="mformat" key="Ctrl+1">设置单元格格式(F)...</menu-item><hr>
<button class="more" aria-label="更多"><ui-icon name="chevd"></ui-icon></button>`);

/* ---------- step annotations ---------- */
define('step-arrow', `:host{position:absolute;z-index:5;pointer-events:none}svg{display:block;overflow:visible;filter:drop-shadow(2px 3px 2px #0008)}`, el =>
`<svg width="${el.getAttribute('w')}" height="${el.getAttribute('h')}"><path d="${el.getAttribute('line')}" stroke="#f00" stroke-width="3" stroke-linecap="round"/><path d="${el.getAttribute('head')}" fill="#f00"/></svg>`);
define('step-badge', `:host{position:absolute;z-index:6;width:24px;height:24px;border-radius:50%;background:#00f;border:3px solid #fff;box-shadow:1px 2px 3px #0009;color:#fff;font:14px/18px "DejaVu Sans",sans-serif;text-align:center}`, `<slot></slot>`);
define('site-mark', `
:host{position:absolute;right:10px;bottom:9px;z-index:6;display:flex;align-items:center;gap:4px;pointer-events:none;opacity:.9}
.n{font:700 21px/23px "Noto Sans CJK SC",sans-serif;color:#5a9ad6}
.u{font:700 16px/18px "Liberation Sans",sans-serif;color:#58c07e}
svg{display:block}`,
`<svg width="42" height="40" viewBox="0 0 42 40" aria-hidden="true"><defs><linearGradient id="a" x1="0" y1="1" x2="1" y2="0"><stop offset="0" stop-color="#3f80c4"/><stop offset="1" stop-color="#5cc0f0"/></linearGradient><linearGradient id="b" x1="0" y1="1" x2="1" y2="0"><stop offset="0" stop-color="#e5e04a"/><stop offset=".5" stop-color="#6cc56e"/><stop offset="1" stop-color="#4db07a"/></linearGradient></defs>
<path d="M42 1C24-1 1 10 1 24c0 5 3 8 7 8-2-7 5-17 14-22C28 6 34 3 42 1z" fill="url(#a)"/><path d="M14 24C18 12 29 6 36 9c-6 1-12 6-14 13z" fill="url(#a)"/><path d="M36 10c8 8 5 24-8 28-9 2-16-1-22 1 9-2 16-6 18-12-5 3-9 2-11 0 10 0 21-6 23-17z" fill="url(#b)"/></svg>
<div><div class="n">极光下载站</div><div class="u">www.xz7.com</div></div>`);
define('edge-meter', `:host{position:absolute;right:0;top:853px;width:10px;height:60px;background:#3c404c;border:1px solid #23262e;border-right:0;border-radius:4px 0 0 4px;padding:12px 2px 3px 4px;z-index:6}
i{display:block;height:100%;background:repeating-linear-gradient(transparent 0 1px,#3c404c 1px 3px),linear-gradient(#7a8050,#e6c94a 40%,#3fd6b0 80%)}`, `<i></i>`);

/* ---------- shell ---------- */
define('app-shell', `
:host{display:flex;flex-direction:column;height:100vh;position:relative;overflow:hidden}
.mid{flex:1;min-height:0;display:grid;grid-template-columns:minmax(0,1fr) 262px 43px}
.main{display:flex;flex-direction:column;min-width:0;min-height:0}
.sheet{flex:1;min-height:0;display:flex}
sheet-grid{flex:1;min-width:0}`,
`<title-bar></title-bar><menu-bar></menu-bar><ribbon-bar></ribbon-bar>
<div class="mid"><div class="main"><formula-bar></formula-bar><div class="sheet"><sheet-grid></sheet-grid><v-scroll></v-scroll></div><sheet-tabs></sheet-tabs></div><side-panel></side-panel><side-rail></side-rail></div>
<status-bar></status-bar>
<mini-toolbar></mini-toolbar><context-menu></context-menu>
<step-arrow style="left:174px;top:516px" w="94" h="84" line="M2 82L80 13" head="M92 1L70 9L76 13L80 17L84 23z"></step-arrow><step-badge style="left:267px;top:535px">1</step-badge>
<step-arrow style="left:236px;top:910px" w="92" h="50" line="M2 2L72 37" head="M87 46L71 19L69 34L63 42z"></step-arrow><step-badge style="left:271px;top:907px">2</step-badge>
<site-mark></site-mark><edge-meter></edge-meter>`);
</script>
</body>
</html>
